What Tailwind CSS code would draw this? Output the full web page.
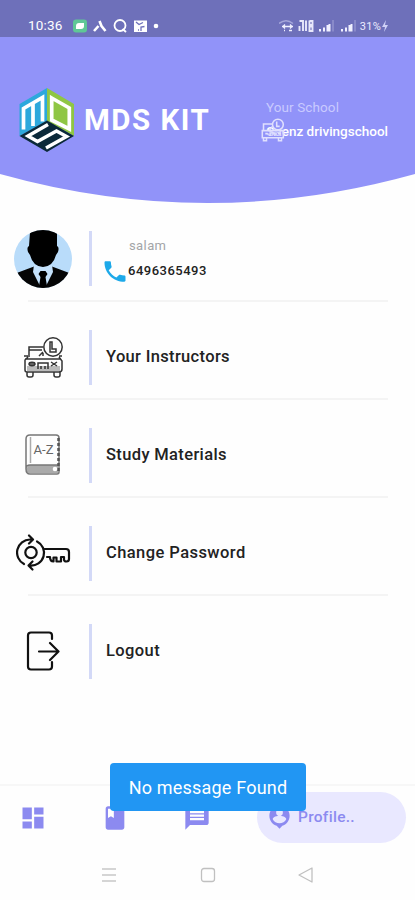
<!DOCTYPE html>
<html lang="en">
<head>
  <meta charset="UTF-8" />
  <meta name="viewport" content="width=device-width, initial-scale=1.0"/>
  <title>MDS KIT</title>
  <script src="https://cdn.jsdelivr.net/npm/@tailwindcss/browser@4"></script>
</head>
<body class="bg-[#fefefe]">
<div class="relative w-[415px] h-[900px] overflow-hidden flex flex-col font-['Roboto',sans-serif] text-[#222]">

  <!-- Header -->
  <header class="relative h-[203px] shrink-0 text-white">
    <svg class="absolute inset-0" width="415" height="203" viewBox="0 0 415 203">
      <path d="M0 0H415V174Q311 203 207.500 203Q104 203 0 174Z" fill="#9193f9"/>
    </svg>

    <!-- Status bar -->
    <div class="relative h-[37px] bg-[#6e70ba] flex items-center justify-between pl-[28px] pr-[26px] pt-[15px]">
      <div class="flex items-center">
        <span class="w-[45px] text-[13.5px] leading-none tracking-[0.2px]">10:36</span>
        <svg width="90" height="16" viewBox="0 0 90 16" fill="none">
          <rect x="0" y="1.500" width="14" height="13" rx="3" fill="#5fc796"/>
          <path d="M3 11V8Q3 5 6 5H11V8Q11 11 8 11Z" fill="#fff"/>
          <path d="M26.500 3L28.500 8L32.500 13M25.500 8L21 13" stroke="#fff" stroke-width="2.600"/>
          <circle cx="47" cy="7.500" r="5.500" stroke="#fff" stroke-width="1.800"/>
          <path d="M49.500 11L53 14" stroke="#fff" stroke-width="2"/>
          <path d="M61 2.500H74V14H61Z" fill="#fff"/>
          <path d="M63 4L66 6.500L70 4.500M68 13V9L71.500 8.500M65 12H66" stroke="#6e70ba" stroke-width="1.300"/>
          <circle cx="83" cy="8" r="2.300" fill="#fff"/>
        </svg>
      </div>
      <div class="flex items-center">
        <svg class="mr-[0.5px]" width="80" height="14" viewBox="0 0 80 14" fill="none">
          <path d="M0 4.500Q7 -1 14 4.500" stroke="#a5a6da" stroke-width="1.500"/>
          <path d="M3 7.500H14M6 5.500L4 7.500L6 9.500M11 5.500L13 7.500L11 9.500M5 11.500H6M10 11.500H13" stroke="#f0f0ff" stroke-width="1.300"/>
          <path d="M20.500 2H24V6M24 1.500V12M20.500 7V12M27 1.500V12M30.500 2H33.500V6H30.500V1.500M30.500 7.500H33.500V12H30.500Z" stroke="#e8e8fb" stroke-width="1.900"/>
          <path d="M41 10V12.500M45 8.500V12.500M48.500 6V12.500M50.500 5V12.500M63 10V12.500M67 8.500V12.500M70.500 6V12.500M72.500 5V12.500" stroke="#f0f0ff" stroke-width="2"/>
          <path d="M54 1V12.500M76 1V12.500" stroke="#8c8dcb" stroke-width="1.800"/>
        </svg>
        <span class="text-[11px] leading-none tracking-[0.3px] text-[#ececff]">31%</span>
        <svg width="8" height="12" viewBox="0 0 8 12"><path d="M5 0L1 7H4L3 12L7 5H4Z" fill="#cfd0f6"/></svg>
      </div>
    </div>

    <div class="relative flex justify-between pl-[19px] pr-[27px] pt-[51px]">
      <div class="flex items-center h-[65px]">
        <svg width="56" height="65" viewBox="0 0 56 65" fill="none">
          <path d="M28 0L0.500 16V48L28 33Z" fill="#2da8dc"/>
          <path d="M28 0L55 16V48L28 33Z" fill="#8fc644"/>
          <path d="M28 32.500L0.500 48L28 64L55 48Z" fill="#0b2939"/>
          <path d="M4.500 41.500V20.500L23.500 9.500V33.500M14 15V38" stroke="#fff" stroke-width="3.700"/>
          <path d="M32.700 10L50.300 20V41L32.700 32Z" stroke="#fff" stroke-width="3.700"/>
          <path d="M29 36.500L9 48L18.500 53.500L37.500 43L47.500 48.500L27 60" stroke="#fff" stroke-width="3.500"/>
        </svg>
        <span class="pl-[9px] text-[29.500px] font-bold tracking-[1.5px] leading-none whitespace-nowrap">MDS KIT</span>
      </div>
      <div class="w-[128px] pt-[11px]">
        <p class="pl-[6px] text-[13.500px] leading-[16px] tracking-[0.1px] text-[#c9caff]">Your School</p>
        <div class="relative flex items-center justify-end h-[28px] mt-[3px]">
          <span class="text-[13.500px] font-medium leading-none whitespace-nowrap">Saenz drivingschool</span>
          <svg class="absolute left-0 top-0" width="25" height="24" viewBox="0 0 40 40" fill="none" stroke="#e0e0fe" stroke-width="2.600">
            <path d="M5 20V10H20M3 21H38V33H3ZM5 33V38H10V33M30 33V38H35V33" fill="#9193f9" fill-opacity=".4"/>
            <path d="M8 26H12M16 30V25H24V30M29 26H34M15 20L20 14"/>
            <circle cx="29" cy="11" r="9"/><path d="M27 6V14H32"/>
          </svg>
        </div>
      </div>
    </div>
  </header>

  <!-- Menu -->
  <main class="flex-1">
    <div class="relative flex h-[98px] pt-[28px]">
      <div class="w-[89px] pl-[14px] -mt-[1px]">
        <svg width="58" height="58" viewBox="0 0 58 58">
          <clipPath id="face"><circle cx="29" cy="29" r="29"/></clipPath>
          <g clip-path="url(#face)">
            <rect width="58" height="58" fill="#b9dcfa"/>
            <path d="M0 44L20 36.500L29 44L38 36.500L58 44V58H0Z" fill="#050505"/>
            <path d="M20 35L19 42L27 58H31L39 42L38 35Z" fill="#c4e1fb"/>
            <path d="M16 2Q29 -5 43 2V16Q45.500 17 44 22L42 25Q39 36.500 29 37Q19 36.500 16 25L14 22Q12.500 17 15 16Z" fill="#000"/>
            <path d="M26.500 41H31.500L33.500 44L31.500 47L33 56L29 60L25 56L26.500 47L24.500 44Z" fill="#000"/>
          </g>
        </svg>
      </div>
      <span class="w-[3px] h-[55px] bg-[#d3d9f7]"></span>
      <div class="pl-[9px] pt-[7px]">
        <p class="pl-[28px] text-[13px] leading-[16px] tracking-[0.4px] text-[#a3a5a8]">salam</p>
        <div class="flex h-[26px] mt-[3px]">
          <svg class="mt-[2px]" width="28" height="25" viewBox="0 1 24 22" preserveAspectRatio="none"><path fill="#1da9e9" d="M6.620 10.790c1.440 2.830 3.760 5.140 6.590 6.590l2.200-2.200c.27-.27.67-.36 1.020-.24 1.120.37 2.330.57 3.570.57.550 0 1 .45 1 1V20c0 .55-.45 1-1 1-9.390 0-17-7.610-17-17 0-.55.450-1 1-1h3.500c.550 0 1 .45 1 1 0 1.250.2 2.450.57 3.570.110.350.030.740-.25 1.020l-2.200 2.200z"/></svg>
          <span class="-ml-[1px] text-[13px] font-medium leading-[27px] tracking-[0.5px]">6496365493</span>
        </div>
      </div>
      <span class="absolute left-[28px] -bottom-px w-[360px] h-[2px] bg-[#f4f4f4]"></span>
    </div>

    <div class="relative flex h-[98px] pt-[29px]">
      <div class="w-[89px] pl-[23px] pt-[7px]">
        <svg width="40" height="41" viewBox="0 0 40 41" fill="none" stroke="#333" stroke-width="1.500">
          <path d="M4 29H37V34H4Z" fill="#bbb" stroke="none"/>
          <path d="M6 20V10H20M6 13H19M5 20L2 23V33Q2 35 4 35H36Q39 35 39 32V24L36 20M2 22H38M1 19H5M36 19H39M4 35V38Q4 40 6 40H8Q10 40 10 38V35M31 35V38Q31 40 33 40H35Q37 40 37 38V35"/>
          <ellipse cx="9" cy="27" rx="3" ry="1.700"/><path d="M6 27H12M15 32V26H25V32M18 29V32M22 29V32M28 25L34 29M28 29L34 25M16 19L20 15M20 19V16"/>
          <circle cx="30" cy="10" r="9.200" fill="#fefefe"/>
          <path d="M27 5H29V12H33V15H27Z"/>
        </svg>
      </div>
      <span class="w-[3px] h-[55px] bg-[#d3d9f7]"></span>
      <p class="pl-[14px] h-[55px] leading-[53px] text-[16.500px] font-medium tracking-[0.34px]">Your Instructors</p>
      <span class="absolute left-[28px] -bottom-px w-[360px] h-[2px] bg-[#f4f4f4]"></span>
    </div>

    <div class="relative flex h-[98px] pt-[29px]">
      <div class="w-[89px] pl-[25px] pt-[6px]">
        <svg width="36" height="41" viewBox="0 0 36 41" fill="none" stroke="#777" stroke-width="1.500">
          <path d="M4 31H33V39H4Q1 39 1 35Z" fill="#aaa" stroke="none"/>
          <path d="M1 35V5Q1 1 5 1H31Q34 1 34 4V38Q34 40 32 40H5Q1 40 1 35Q1 31 5 31H33"/>
          <path d="M5.500 3V29" stroke="#aaa"/>
          <path d="M33.500 4V38" stroke="#555" stroke-width="2.500" stroke-dasharray="3 2"/>
          <circle cx="30" cy="35" r="2.300" fill="#fff" stroke="none"/>
          <text x="8.500" y="19.500" font-size="12" textLength="20" lengthAdjust="spacingAndGlyphs" fill="#666" stroke="none">A-Z</text>
        </svg>
      </div>
      <span class="w-[3px] h-[55px] bg-[#d3d9f7]"></span>
      <p class="pl-[14px] h-[55px] leading-[53px] text-[16.500px] font-medium tracking-[0.36px]">Study Materials</p>
      <span class="absolute left-[28px] -bottom-px w-[360px] h-[2px] bg-[#f4f4f4]"></span>
    </div>

    <div class="relative flex h-[98px] pt-[29px]">
      <div class="w-[89px] pl-[16px] pt-[8px]">
        <svg width="55" height="38" viewBox="0 0 55 38" fill="none" stroke="#111" stroke-width="2.200" stroke-linecap="round" stroke-linejoin="round">
          <circle cx="15" cy="18.500" r="5.700"/>
          <path d="M16 5.500H14A13 13 0 0 0 8 30M13 1.500L17 5.500L13 9.500"/>
          <path d="M21 7.500A12.700 12.700 0 0 1 14 31.500M16.500 27.500L12.500 31.500L16.500 35.500"/>
          <path d="M28.500 15H50Q53 15 53 18V25Q53 27.500 50.500 27.500Q48 27.500 48 25.500V23H45V27.500H40.500V23.500H37.500V27.500Q34 27.500 34 23H31"/>
        </svg>
      </div>
      <span class="w-[3px] h-[55px] bg-[#d3d9f7]"></span>
      <p class="pl-[14px] h-[55px] leading-[53px] text-[16.500px] font-medium tracking-[0.43px]">Change Password</p>
      <span class="absolute left-[28px] -bottom-px w-[360px] h-[2px] bg-[#f4f4f4]"></span>
    </div>

    <div class="flex h-[98px] pt-[29px]">
      <div class="w-[89px] pl-[26px] pt-[7px]">
        <svg width="34" height="40" viewBox="0 0 34 40" fill="none" stroke="#111" stroke-width="2.200" stroke-linecap="round" stroke-linejoin="round">
          <path d="M26 8V4.500Q26 1.500 23 1.500H5Q2 1.500 2 4.500V35.500Q2 38.500 5 38.500H23Q26 38.500 26 35.500V31M13 20.500H32.500M24 12L32.500 20.500L24 29"/>
        </svg>
      </div>
      <span class="w-[3px] h-[55px] bg-[#d3d9f7]"></span>
      <p class="pl-[14px] h-[55px] leading-[53px] text-[16.500px] font-medium tracking-[0.4px]">Logout</p>
    </div>
  </main>

  <!-- Bottom navigation -->
  <nav class="h-[67px] shrink-0 border-t-2 border-[#f7f7f7] flex items-center pl-[19px] pr-[9px] pb-[2px] text-[#8c8af0]">
    <svg class="shrink-0" width="28" height="28" viewBox="0 0 24 24" fill="currentColor"><path d="M3 13h8V3H3v10zm0 8h8v-6H3v6zm10 0h8V11h-8v10zm0-18v6h8V3h-8z"/></svg>
    <svg class="shrink-0 ml-[54px]" width="28" height="28" viewBox="0 0 24 24" fill="currentColor"><path d="M18 2H6c-1.100 0-2 .9-2 2v16c0 1.100.9 2 2 2h12c1.100 0 2-.9 2-2V4c0-1.100-.9-2-2-2zM6 4h5v8l-2.500-1.500L6 12V4z"/></svg>
    <svg class="shrink-0 ml-[54px]" width="28" height="28" viewBox="0 0 24 24" fill="currentColor"><path d="M20 2H4c-1.100 0-2 .9-2 2v18l4-4h14c1.100 0 2-.9 2-2V4c0-1.100-.9-2-2-2zm-2 12H6v-2h12v2zm0-3H6V9h12v2zm0-3H6V6h12v2z"/></svg>
    <div class="ml-auto w-[149px] h-[51px] rounded-full bg-[#e9e8ff] flex items-center pl-[9px]">
      <svg width="27" height="27" viewBox="0 0 24 24" fill="currentColor"><path d="M12 2C6.480 2 3 5.500 3 10.500c0 4.500 3 8 6.500 8.800L12 22l2.500-2.700C18 18.500 21 15 21 10.500 21 5.500 17.500 2 12 2zm0 2.500a3 3 0 1 1 0 6 3 3 0 0 1 0-6zM12 17.200c-2.500 0-4.900-1.500-6-3.700 0-2 4-3 6-3s6 1 6 3c-1.100 2.200-3.500 3.700-6 3.700z"/></svg>
      <span class="pl-[5px] text-[15.500px] font-medium tracking-[0.3px]">Profile..</span>
    </div>
  </nav>

  <!-- System buttons -->
  <div class="h-[49px] shrink-0 flex items-center justify-between pl-[101px] pr-[101px] pb-[1px]">
    <svg width="16" height="16" viewBox="0 0 16 16" stroke="#c8c8c8" stroke-width="1.400"><path d="M1 2H15M1 8H15M1 14H15"/></svg>
    <svg width="16" height="16" viewBox="0 0 16 16" fill="none" stroke="#c0c0c0" stroke-width="1.300"><rect x="1.500" y="1.500" width="13" height="13" rx="2.500"/></svg>
    <svg width="16" height="16" viewBox="0 0 16 16" fill="none" stroke="#c0c0c0" stroke-width="1.300" stroke-linejoin="round"><path d="M14 1V15L1 8Z"/></svg>
  </div>

  <!-- Toast -->
  <div class="absolute left-[110px] top-[763px] w-[196px] h-[48px] rounded-[4px] bg-[#2196f3] text-white text-[18px] leading-[50px] tracking-[0.2px] text-center whitespace-nowrap">No message Found</div>
</div>
</body>
</html>
